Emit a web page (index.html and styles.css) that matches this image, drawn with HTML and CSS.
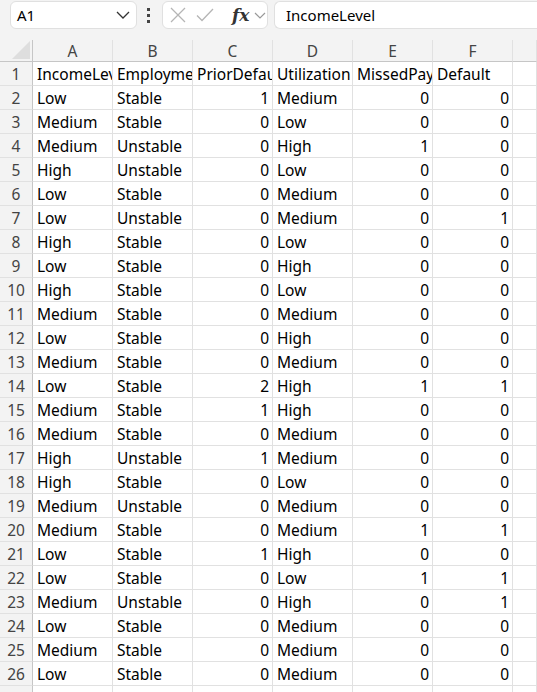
FILE: index.html
```html
<!DOCTYPE html>
<html lang="en">
<head>
    <meta charset="UTF-8">
    <meta name="viewport" content="width=device-width, initial-scale=1.0">
    <title>Credit data</title>
    <link rel="stylesheet" href="styles.css">
</head>
<body>
    <div class="toolbar">
        <div class="name-box">
            <span>A1</span>
            <svg class="chevron" width="14" height="8" viewBox="0 0 14 8"><path d="M1 1l6 6 6-6" fill="none" stroke="#333" stroke-width="1.3"/></svg>
        </div>
        <div class="kebab"><i></i><i></i><i></i></div>
        <div class="fx-buttons">
            <svg width="18" height="18" viewBox="0 0 18 18"><path d="M2 2l14 14M16 2L2 16" stroke="#b5b5b5" stroke-width="1.3" fill="none"/></svg>
            <svg width="20" height="18" viewBox="0 0 20 18"><path d="M2 9.5l5 5L18 3" stroke="#b5b5b5" stroke-width="1.3" fill="none"/></svg>
            <span class="fx">fx</span>
            <svg class="small-chev" width="12" height="7" viewBox="0 0 12 7"><path d="M1 1l5 5 5-5" fill="none" stroke="#999" stroke-width="1.2"/></svg>
        </div>
        <div class="formula">IncomeLevel</div>
    </div>

    <div class="sheet" id="sheet">
        <div class="row head-row">
            <div class="corner"><b></b></div>
            <div class="col-head">A</div>
            <div class="col-head">B</div>
            <div class="col-head">C</div>
            <div class="col-head">D</div>
            <div class="col-head">E</div>
            <div class="col-head">F</div>
            <div class="col-head rest"></div>
        </div>
    </div>

    <script>
        const header = ['IncomeLevel', 'EmploymentStatus', 'PriorDefaults', 'Utilization', 'MissedPayments', 'Default'];
        const data = [
            ['Low', 'Stable', 1, 'Medium', 0, 0],
            ['Medium', 'Stable', 0, 'Low', 0, 0],
            ['Medium', 'Unstable', 0, 'High', 1, 0],
            ['High', 'Unstable', 0, 'Low', 0, 0],
            ['Low', 'Stable', 0, 'Medium', 0, 0],
            ['Low', 'Unstable', 0, 'Medium', 0, 1],
            ['High', 'Stable', 0, 'Low', 0, 0],
            ['Low', 'Stable', 0, 'High', 0, 0],
            ['High', 'Stable', 0, 'Low', 0, 0],
            ['Medium', 'Stable', 0, 'Medium', 0, 0],
            ['Low', 'Stable', 0, 'High', 0, 0],
            ['Medium', 'Stable', 0, 'Medium', 0, 0],
            ['Low', 'Stable', 2, 'High', 1, 1],
            ['Medium', 'Stable', 1, 'High', 0, 0],
            ['Medium', 'Stable', 0, 'Medium', 0, 0],
            ['High', 'Unstable', 1, 'Medium', 0, 0],
            ['High', 'Stable', 0, 'Low', 0, 0],
            ['Medium', 'Unstable', 0, 'Medium', 0, 0],
            ['Medium', 'Stable', 0, 'Medium', 1, 1],
            ['Low', 'Stable', 1, 'High', 0, 0],
            ['Low', 'Stable', 0, 'Low', 1, 1],
            ['Medium', 'Unstable', 0, 'High', 0, 1],
            ['Low', 'Stable', 0, 'Medium', 0, 0],
            ['Medium', 'Stable', 0, 'Medium', 0, 0],
            ['Low', 'Stable', 0, 'Medium', 0, 0]
        ];

        function addRow(num, values) {
            const sheet = document.getElementById('sheet');
            const row = document.createElement('div');
            row.className = 'row';
            const rh = document.createElement('div');
            rh.className = 'row-head';
            rh.textContent = num;
            row.appendChild(rh);
            values.forEach(v => {
                const cell = document.createElement('div');
                cell.className = 'cell';
                if (typeof v === 'number') cell.classList.add('num');
                cell.textContent = v;
                row.appendChild(cell);
            });
            const rest = document.createElement('div');
            rest.className = 'cell rest';
            row.appendChild(rest);
            sheet.appendChild(row);
        }

        addRow(1, header);
        data.forEach((r, i) => addRow(i + 2, r));
        addRow(27, ['', '', '', '', '', '']);
    </script>
</body>
</html>
```

FILE: styles.css
```css
body {
    margin: 0;
    background-color: #f3f3f3;
    font-family: "Noto Sans", "Open Sans", sans-serif;
    color: #000;
    overflow: hidden;
}

/* top bar with name box and formula input */
.toolbar {
    display: flex;
    align-items: center;
    height: 28px;
    padding: 1px 0 0 10px;
    margin-bottom: 11px;
}
.name-box {
    width: 127px;
    height: 28px;
    box-sizing: border-box;
    background-color: #fff;
    border: 1px solid #e0e0e0;
    border-radius: 6px;
    display: flex;
    align-items: center;
    justify-content: space-between;
    padding: 0 6px 0 6px;
    font-size: 15px;
}
.kebab {
    width: 3px;
    margin: 0 12px 0 10px;
    display: flex;
    flex-direction: column;
    gap: 3px;
}
.kebab i {
    width: 3px;
    height: 3px;
    background-color: #444;
}
.fx-buttons {
    width: 106px;
    height: 28px;
    box-sizing: border-box;
    background-color: #fff;
    border: 1px solid #e0e0e0;
    border-radius: 6px;
    display: flex;
    align-items: center;
    padding-left: 6px;
    gap: 8px;
}
.fx {
    font-family: "DejaVu Serif", "Liberation Serif", serif;
    font-style: italic;
    font-weight: bold;
    font-size: 17px;
    color: #333;
    margin-left: 9px;
}
.small-chev {
    margin-left: -3px;
}
.formula {
    flex: 1;
    height: 28px;
    box-sizing: border-box;
    margin-left: 6px;
    background-color: #fff;
    border: 1px solid #e0e0e0;
    border-right: none;
    border-radius: 6px 0 0 6px;
    display: flex;
    align-items: center;
    padding-left: 11px;
    font-size: 15px;
}

/* grid */
.row {
    display: flex;
    height: 24px;
}
.head-row {
    height: 22px;
}
.corner,
.row-head {
    width: 33px;
    flex-shrink: 0;
    box-sizing: border-box;
    border-right: 1px solid #c6c6c6;
    border-bottom: 1px solid #e1e1e1;
    background-color: #f3f3f3;
}
.corner {
    border-bottom: 1px solid #c6c6c6;
    display: flex;
    justify-content: flex-end;
    align-items: flex-end;
    padding: 0 2px 2px 0;
}
.corner b {
    width: 0;
    height: 0;
    border-left: 18px solid transparent;
    border-bottom: 18px solid #dedede;
}
.row-head {
    display: flex;
    align-items: center;
    justify-content: center;
    padding-top: 1px;
    font-size: 15.5px;
    color: #444;
}
.col-head {
    width: 80px;
    flex-shrink: 0;
    box-sizing: border-box;
    border-right: 1px solid #e1e1e1;
    border-bottom: 1px solid #c6c6c6;
    display: flex;
    align-items: center;
    justify-content: center;
    font-size: 15.5px;
    color: #444;
}
.cell {
    width: 80px;
    flex-shrink: 0;
    box-sizing: border-box;
    border-right: 1px solid #e1e1e1;
    border-bottom: 1px solid #e1e1e1;
    background-color: #fff;
    font-size: 15.5px;
    line-height: 24px;
    padding: 0 3px 0 4px;
    white-space: nowrap;
    overflow: hidden;
}
.cell.num {
    text-align: right;
}
.rest {
    flex: 1;
}
```
